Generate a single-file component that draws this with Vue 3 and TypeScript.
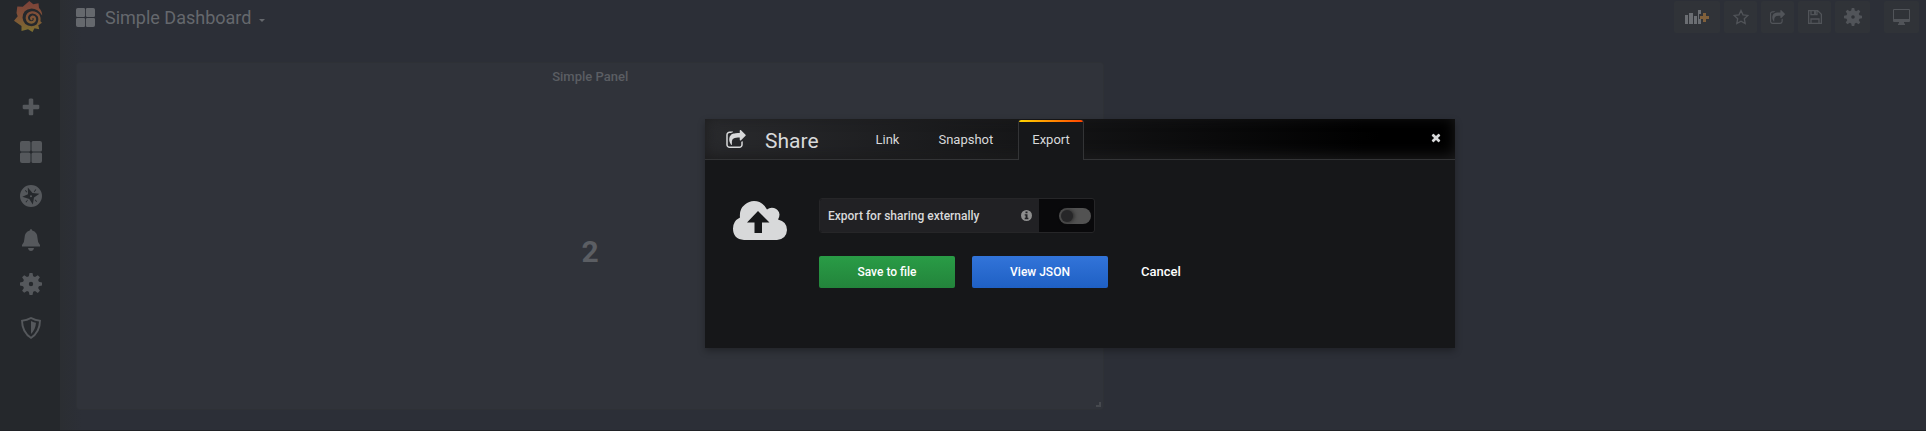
<script setup lang="ts">
import { ref } from 'vue'

interface Icon {
  name: string
  box: string
  path: string
}

const plus = 'M1408 608v192q0 40-28 68t-68 28H896v416q0 40-28 68t-68 28H608q-40 0-68-28t-28-68V896H96q-40 0-68-28T0 800V608q0-40 28-68t68-28h416V96q0-40 28-68t68-28h192q40 0 68 28t28 68v416h416q40 0 68 28t28 68z'
const grid = 'M2 0h7q1.500 0 1.500 1.500v7.500q0 1.500-1.500 1.500H1.500Q0 10.500 0 9V2Q0 0 2 0zM13 0h7q2 0 2 2v7q0 1.500-1.500 1.500H13q-1.500 0-1.500-1.500V1.500Q11.500 0 13 0zM1.500 11.500H9q1.500 0 1.500 1.500v7.500Q10.500 22 9 22H2q-2 0-2-2v-7q0-1.500 1.500-1.500zM13 11.500h7.500Q22 11.500 22 13v7q0 2-2 2h-7q-1.500 0-1.500-1.500V13q0-1.500 1.500-1.500z'
const compass = 'M11 0a11 11 0 1 0 0 22a11 11 0 0 0 0-22zM7.800 2.500L12.500 8l7 .8L14 12.500l-1.200 7L9.300 14l-7-2.200L8 9.300zM11 10.200a1 1 0 1 1 0 2a1 1 0 0 1 0-2zM15.500 4.200l.8.600-2 2.400-.5-.4zM5 5.800l.7-.7 1.500 2-.5.500zM6.300 17.500l-.8-.6 1.900-2.200.5.400zM17 16.300l-.7.700-1.500-2 .5-.5z'
const bell = 'M11 0q1 0 1.200 1.500Q17.500 3 17.500 9q0 4.500 2.500 7v1.500H2V16q2.500-2.500 2.500-7Q4.500 3 9.800 1.500 10 0 11 0zM8 19h6q-.5 3-3 3t-3-3z'
const cog = 'M9.500 0h3l.7 3.200 1.800.8 2.800-1.800 2.100 2.100L18.100 7l.8 1.800 3.100.7v3l-3.100.7-.8 1.800 1.800 2.700-2.100 2.200L15 18l-1.800.8-.7 3.200h-3l-.7-3.200L7 18l-2.800 1.800-2.100-2.100L3.900 15l-.8-1.800L0 12.500v-3l3.100-.7L3.900 7 2.100 4.300l2.100-2.100L7 4l1.800-.8zM11 8.800a2.200 2.200 0 1 0 0 4.400a2.200 2.200 0 0 0 0-4.400z'
const shield = 'M11 0Q16 2.500 21 3q0 13-10 19Q1 16 1 3q5-.5 10-3zM11 2Q7 4 3 4.500q.5 10 8 15.300Q18.500 14.500 19 4.500 15 4 11 2zM11 4q3 1.500 5 1.700Q15.500 12.500 11 17z'
const share = 'M1408 989v259q0 119-84.500 203.500T1120 1536H288q-119 0-203.500-84.500T0 1248V416q0-119 84.500-203.500T288 128h255q13 0 22.500 9.500T575 160q0 27-26 32-77 26-133 60-10 4-16 4H288q-66 0-113 47t-47 113v832q0 66 47 113t113 47h832q66 0 113-47t47-113v-214q0-19 18-29 28-13 54-37 16-16 35-8 21 9 21 29zm237-496l-384 384q-18 19-45 19-12 0-25-5-39-17-39-59V640H992q-323 0-438 131-119 137-74 473 3 23-20 34-8 2-12 2-16 0-26-13-10-14-21-31t-39.500-68.500-49.500-99.500-38.500-114-17.500-122q0-49 3.500-91t14-90 28-88 47-81.500 68.500-74 94.500-61.500 124.500-48.500 159.500-30.500 196.500-11h160V64q0-42 39-59 13-5 25-5 26 0 45 19l384 384q19 19 19 45t-19 45z'

const navItems: Icon[] = [
  { name: 'Create', box: '-228 -136 1864 1864', path: plus },
  { name: 'Dashboards', box: '0 0 22 22', path: grid },
  { name: 'Explore', box: '0 0 22 22', path: compass },
  { name: 'Alerting', box: '0 0 22 22', path: bell },
  { name: 'Configuration', box: '0 0 22 22', path: cog },
  { name: 'Server Admin', box: '0 0 22 22', path: shield },
]

const tabs = ['Link', 'Snapshot', 'Export']
const activeTab = ref('Export')
const shareExternally = ref(false)
</script>

<template>
  <div class="app">
    <nav class="sidebar" aria-label="Main">
      <a class="logo" href="#" aria-label="Home">
        <svg viewBox="0 0 30 32" width="30" height="32">
          <defs>
            <linearGradient id="flame" gradientUnits="userSpaceOnUse" x1="0" y1="0" x2="0" y2="32">
              <stop offset="0" stop-color="#7c4039" />
              <stop offset=".5" stop-color="#805138" />
              <stop offset="1" stop-color="#7b6f30" />
            </linearGradient>
          </defs>
          <path fill="url(#flame)" d="M15.300 1l4 3.200 5.200-1 .5 4.800Q28 10.500 28.200 15.500 24 8.500 17.500 8.500 8.500 9.500 8.500 17.800 9.500 26 17.500 26.300q5.500-.3 7.800-5.800l2.700 2.300-3.700 2.500.9 4-4.700-1L18.500 32 14 29.300 7.500 31l0-5L0 20.700l3.700-4.500L2.500 13 3.300 6.500l5.500.2z" />
          <path fill="none" stroke="url(#flame)" stroke-width="2.300" stroke-linecap="round" d="M24.500 23.500Q26.500 19 24.500 15.500 22 12 18 12.300 12.800 13.300 12.800 18 13.500 22.300 17.300 22.500 20.800 22.300 21 19 20.500 16.500 18.300 16.700 16.500 17.500 17.500 19" />
        </svg>
      </a>
      <ul>
        <li v-for="item in navItems" :key="item.name">
          <a href="#" :aria-label="item.name">
            <svg :viewBox="item.box" width="22" height="22"><path :d="item.path" fill-rule="evenodd" /></svg>
          </a>
        </li>
      </ul>
    </nav>

    <main class="content">
      <header class="topbar">
        <button class="dash-title" type="button">
          <svg viewBox="0 0 22 22" width="19" height="19"><path :d="grid" /></svg>
          <span>Simple Dashboard</span>
          <i class="caret"></i>
        </button>
        <div class="tools">
          <button class="tool add" type="button" aria-label="Add panel">
            <svg viewBox="0 0 24 16" width="24" height="16">
              <path d="M0 6h3v9H0zM4 4h4v11H4zM9 7h3v8H9zM13 1h3v4h-2v5h2v5h-3z" />
              <path class="accent" d="M18 4h3v3h3v3h-3v3h-3v-3h-3V7h3z" />
            </svg>
          </button>
          <button class="tool" type="button" aria-label="Mark as favorite">
            <svg viewBox="0 0 16 16" width="16" height="16"><path class="line" d="M8 1.500l2 4.300 4.800.6-3.500 3.300.9 4.800L8 12.200l-4.200 2.300.9-4.800-3.500-3.300L6 5.800z" /></svg>
          </button>
          <button class="tool" type="button" aria-label="Share dashboard">
            <svg viewBox="0 0 1664 1536" width="15" height="14"><path :d="share" /></svg>
          </button>
          <button class="tool" type="button" aria-label="Save dashboard">
            <svg viewBox="0 0 14 14" width="14" height="14"><path class="line" d="M.600.600h9l3.800 3.800v9H.600zM3 .600v4h6v-4M3 13.400V9h8v4.400" /><path d="M6 1h2v3H6z" /></svg>
          </button>
          <button class="tool settings" type="button" aria-label="Dashboard settings">
            <svg viewBox="0 0 22 22" width="18" height="18"><path :d="cog" fill-rule="evenodd" /></svg>
          </button>
          <button class="tool tv" type="button" aria-label="Cycle view mode">
            <svg viewBox="0 0 17 16" width="17" height="16"><path fill-rule="evenodd" d="M1 0h15q1 0 1 1v11q0 1-1 1h-5v1.500h1V16H5v-1.500h1V13H1q-1 0-1-1V1q0-1 1-1zM1 1v9h15V1z" /></svg>
          </button>
        </div>
      </header>

      <section class="panel">
        <h2>Simple Panel</h2>
        <div class="stat">2</div>
        <i class="resize"></i>
      </section>
    </main>

    <div class="modal" role="dialog" aria-labelledby="share-title">
      <header class="modal-header">
        <h1 id="share-title">
          <svg viewBox="0 0 1664 1536" width="20" height="18"><path :d="share" /></svg>
          <span>Share</span>
        </h1>
        <div class="tabs" role="tablist">
          <button
            v-for="tab in tabs"
            :key="tab"
            type="button"
            role="tab"
            :aria-selected="activeTab === tab"
            :class="['tab', { active: activeTab === tab }]"
            @click="activeTab = tab"
          >{{ tab }}</button>
        </div>
        <button class="close" type="button" aria-label="Close">
          <svg viewBox="0 0 1408 1408" width="10" height="10"><path :d="plus" transform="rotate(45 704 704)" /></svg>
        </button>
      </header>
      <div class="modal-body">
        <svg class="cloud" viewBox="0 0 54 39" width="54" height="39">
          <path fill-rule="evenodd" d="M11 39Q0 38 0 27.500 0 20 7 16.500 6 8 12 3.500 16 0 21 0q8.500 0 13 8.500 3-2.500 7-1.500 5 1.500 5.500 6.500 0 2.500-1.500 5 9 2 9 10.500Q53.500 38 44 39zM25 10L14 21.500h7.500V32H29V21.500h7.500z" />
        </svg>
        <form class="form" @submit.prevent>
          <div class="field">
            <label for="external">
              <span>Export for sharing externally</span>
              <svg viewBox="0 0 11 11" width="11" height="11"><path fill-rule="evenodd" d="M5.500 0a5.500 5.500 0 1 0 0 11a5.500 5.500 0 0 0 0-11zM4.500 1.500h2v1.700h-2zM3.700 4.200h2.800v3.600h.9v1.400H3.700V7.800h.9V5.600h-.9z" /></svg>
            </label>
            <div class="switch"><input id="external" v-model="shareExternally" type="checkbox" /></div>
          </div>
          <div class="actions">
            <button class="btn save" type="submit">Save to file</button>
            <button class="btn view" type="button">View JSON</button>
            <a class="cancel" href="#">Cancel</a>
          </div>
        </form>
      </div>
    </div>
  </div>
</template>

<style>
body {
  background: #2c2f37;
}
</style>

<style scoped>
* {
  box-sizing: border-box;
}
.app {
  position: relative;
  display: flex;
  min-height: 100vh;
  background: #2c2f37;
  border-bottom: 1px solid #202226;
  font-family: Roboto, sans-serif;
  font-size: 13px;
  line-height: 20px;
  color: #5b5e63;
}
svg {
  display: block;
  flex: none;
  fill: currentColor;
}
button {
  font: inherit;
  color: inherit;
  background: none;
  border: 0;
  padding: 0;
}
a {
  color: inherit;
  text-decoration: none;
}
.sidebar {
  width: 60px;
  flex: none;
  background: #25282c;
}
.logo {
  display: block;
  height: 86px;
  padding-left: 14px;
}
.sidebar ul {
  list-style: none;
  margin: 0;
  padding: 0;
}
.sidebar li {
  height: 44px;
  padding: 11px 0 0 20px;
  color: #55585c;
}
.content {
  flex: 1;
  display: flex;
  flex-direction: column;
  padding: 0 7px 20px 16px;
  background: linear-gradient(90deg, #2b2e32, #2c2f37 22px);
}
.topbar {
  display: flex;
  justify-content: space-between;
  align-items: flex-start;
  height: 62px;
}
.dash-title {
  display: flex;
  align-items: center;
  height: 34px;
  color: #65686d;
  font-size: 18px;
}
.dash-title span {
  margin: 0 8px 0 10px;
  padding-top: 2px;
}
.caret {
  border: 3px solid transparent;
  border-top-color: currentColor;
  margin-top: 10px;
}
.tools {
  display: flex;
  gap: 4px;
  padding-top: 1px;
}
.tool {
  display: flex;
  align-items: center;
  justify-content: center;
  width: 33px;
  height: 32px;
  color: #515459;
  background: #303338;
  border-radius: 2px;
}
.tool.add {
  width: 46px;
  color: #6b6e73;
}
.tool.settings {
  width: 35px;
}
.tool.tv {
  width: 35px;
  margin-left: 10px;
}
.accent {
  fill: #80603b;
}
.line {
  fill: none;
  stroke: currentColor;
  stroke-width: 1.3;
}
.panel {
  position: relative;
  flex: 1;
  display: flex;
  flex-direction: column;
  width: 55.8%;
  min-width: 300px;
  background: #30333a;
  border: 1px solid #2e3136;
  border-radius: 3px;
  text-align: center;
}
h2 {
  margin: 0;
  padding-top: 4px;
  font-size: 13px;
  font-weight: 500;
  line-height: 20px;
}
.stat {
  flex: 1;
  display: flex;
  align-items: center;
  justify-content: center;
  font-size: 30px;
  font-weight: 700;
  padding-top: 8px;
}
.resize {
  position: absolute;
  right: 2px;
  bottom: 2px;
  width: 5px;
  height: 5px;
  border: solid #46494e;
  border-width: 0 2px 2px 0;
}
.modal {
  position: absolute;
  top: 119px;
  left: calc(50% - 258px);
  width: 750px;
  max-width: 100%;
  color: #d8d9da;
  background: #161719;
  box-shadow: 0 3px 7px rgba(0, 0, 0, .3);
}
.modal-header {
  display: flex;
  align-items: center;
  height: 41px;
  border-bottom: 1px solid #333436;
  background: linear-gradient(90deg, #292a2d, #000 90%);
  box-shadow: inset 0 -3px 14px #1c1c1d;
}
h1 {
  display: flex;
  align-items: center;
  margin: 0;
  padding-left: 21px;
  font-size: 21px;
  font-weight: 400;
  line-height: 24px;
}
h1 span {
  margin-left: 19px;
  padding-top: 4px;
}
.tabs {
  display: flex;
  align-self: flex-end;
  gap: 11px;
  margin: 0 auto -1px 43px;
}
.tab {
  height: 40px;
  padding: 0 13px;
  border: 1px solid transparent;
  border-width: 0 1px;
}
.tab.active {
  border-color: #333436;
  border-radius: 3px 3px 0 0;
  background: linear-gradient(90deg, #ffd500, #ff4400) top / 100% 2px no-repeat, #161719;
}
.close {
  padding: 14px;
  margin-top: -3px;
}
.modal-body {
  display: flex;
  align-items: flex-start;
  gap: 32px;
  padding: 38px 28px 60px;
}
.cloud {
  margin-top: 3px;
}
.field {
  display: flex;
  width: 276px;
  height: 35px;
  margin-bottom: 23px;
  border: 1px solid #262628;
  border-radius: 3px;
  overflow: hidden;
  background: #09090b;
}
.field label {
  flex: 1;
  display: flex;
  align-items: center;
  justify-content: space-between;
  padding: 0 7px 0 8px;
  background: #212124;
  font-size: 12px;
  font-weight: 500;
}
.field label svg {
  color: #8e8e8e;
}
.switch {
  display: flex;
  align-items: center;
  justify-content: flex-end;
  width: 55px;
  padding-right: 3px;
}
.switch input {
  appearance: none;
  width: 32px;
  height: 16px;
  margin: 0;
  border-radius: 8px;
  background: #525252;
}
.switch input::before {
  content: "";
  display: block;
  width: 12px;
  height: 12px;
  margin: 2px;
  border-radius: 50%;
  background: #262628;
  box-shadow: 1px 0 4px #222;
}
.switch input:checked::before {
  margin-left: 18px;
  background: #33b5e5;
}
.actions {
  display: flex;
  align-items: center;
  gap: 17px;
}
.btn {
  width: 136px;
  height: 32px;
  border-radius: 2px;
  color: #fff;
  font-size: 12px;
  font-weight: 500;
}
.save {
  background: linear-gradient(#299c46, #23843b);
}
.view {
  background: linear-gradient(#3274d9, #1f60c4);
}
.cancel {
  padding: 6px 16px;
  color: #fff;
  font-weight: 500;
}
</style>
